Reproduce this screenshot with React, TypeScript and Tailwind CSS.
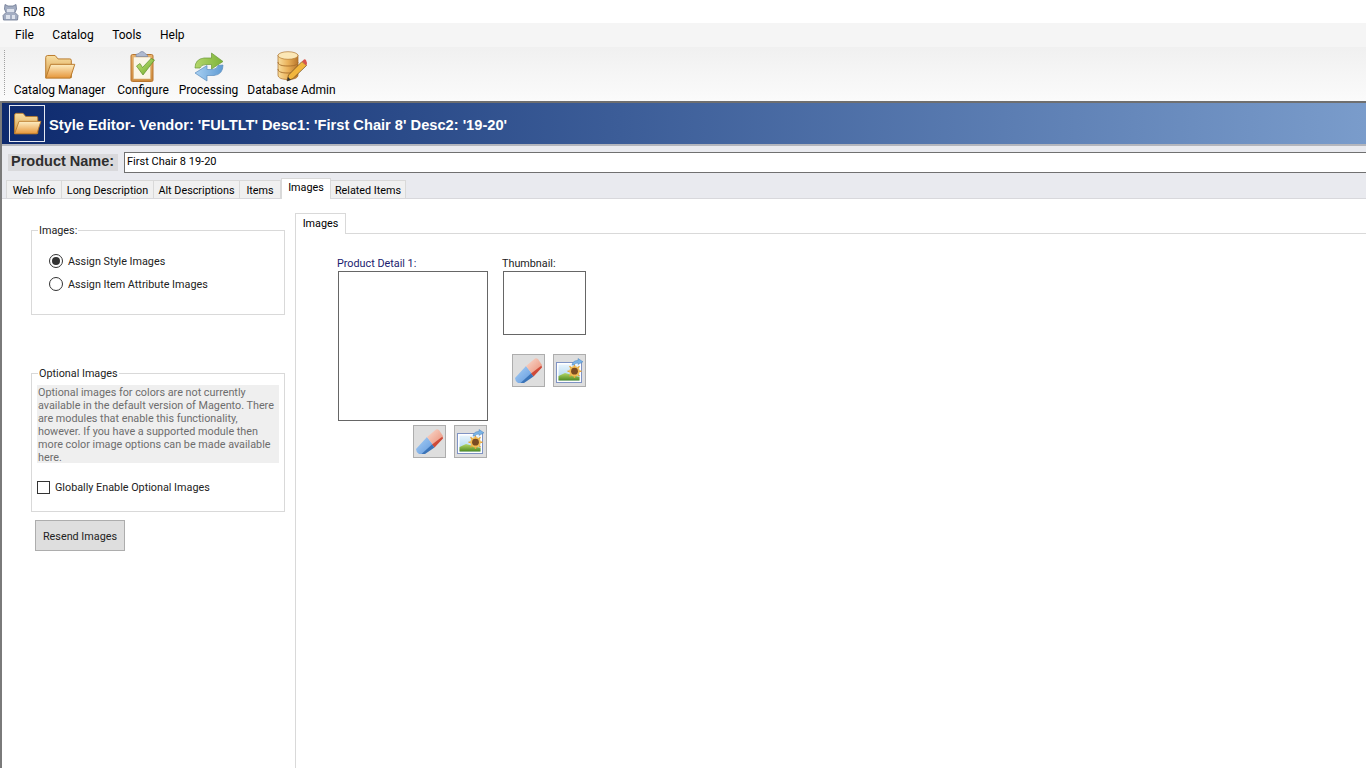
import React from "react";

const Folder = ({ size = 32, id = "a" }: { size?: number; id?: string }) => (
  <svg width={size} height={size * 0.8} viewBox="0 0 32 26">
    <defs>
      <linearGradient id={`fb${id}`} x1="0" y1="0" x2="0" y2="1"><stop offset="0" stopColor="#f8dfa3" /><stop offset="1" stopColor="#d69a45" /></linearGradient>
      <linearGradient id={`ff${id}`} x1="0" y1="0" x2="0" y2="1"><stop offset="0" stopColor="#fdeec4" /><stop offset="1" stopColor="#e6963a" /></linearGradient>
    </defs>
    <path d="M1.500 24V3.500Q1.500 1.500 3.500 1.500H11L14 5H26Q27.500 5 27.500 6.500V24Z" fill={`url(#fb${id})`} stroke="#b97a2c" />
    <path d="M1.500 24.500L6.500 10.500H31L26.500 24.500Z" fill={`url(#ff${id})`} stroke="#b97a2c" strokeLinejoin="round" />
  </svg>
);

const Clipboard = () => (
  <svg width="26" height="31" viewBox="0 0 26 31">
    <defs>
      <linearGradient id="cb" x1="0" y1="0" x2="0" y2="1"><stop offset="0" stopColor="#eab36b" /><stop offset="1" stopColor="#cf8a3c" /></linearGradient>
      <linearGradient id="cc" x1="0" y1="0" x2="1" y2="1"><stop offset="0" stopColor="#c8e87a" /><stop offset="1" stopColor="#6aa52a" /></linearGradient>
    </defs>
    <rect x="1" y="3.500" width="22" height="27" rx="1.500" fill="url(#cb)" stroke="#b7752f" />
    <rect x="3.500" y="6" width="17" height="22" fill="#fbf6e6" stroke="#d8b27d" strokeWidth="0.600" />
    <path d="M6 3.500Q7 3 9 2.500Q10 0.500 12 0.500Q14 0.500 15 2.500Q17 3 18 5.500H6Z" fill="#aeb9cf" stroke="#7c88a3" strokeWidth="0.700" />
    <path d="M6.500 15L10 12.500L12.500 16.500L21 7.500L24.500 9L13 24L6.500 15Z" fill="url(#cc)" stroke="#5d8f2a" strokeWidth="0.700" />
  </svg>
);

const Sync = () => (
  <svg width="30" height="30" viewBox="0 0 30 30">
    <defs>
      <linearGradient id="sg" x1="0" y1="0" x2="1" y2="0"><stop offset="0" stopColor="#b3d66a" /><stop offset="1" stopColor="#7db33a" /></linearGradient>
      <linearGradient id="sb" x1="0" y1="0" x2="1" y2="0"><stop offset="0" stopColor="#a8d0f2" /><stop offset="1" stopColor="#5f9bd3" /></linearGradient>
    </defs>
    <path d="M1 16Q1 7 10 6L17.500 6V1L29 9.500L17.500 17V12.500H12Q7 12.500 6 16Z" fill="url(#sg)" stroke="#6c9a38" strokeWidth="0.700" strokeLinejoin="round" />
    <path d="M29 13Q29 22.500 20 23.500L13 23.500V29L1 21L13 13.500V17.500H18Q23 17.500 24 13.500Z" fill="url(#sb)" stroke="#5a8cbd" strokeWidth="0.700" strokeLinejoin="round" />
  </svg>
);

const DbPencil = () => (
  <svg width="30" height="31" viewBox="0 0 30 31">
    <defs>
      <linearGradient id="dg" x1="0" y1="0" x2="1" y2="0"><stop offset="0" stopColor="#f9dd9c" /><stop offset="0.5" stopColor="#eab159" /><stop offset="1" stopColor="#b9772c" /></linearGradient>
    </defs>
    <path d="M1 4V24C1 27 5 28.500 11 28.500C17 28.500 21 27 21 24V4Z" fill="url(#dg)" stroke="#a86e2a" strokeWidth="0.700" />
    <ellipse cx="11" cy="4.500" rx="10" ry="3.800" fill="#fbe7b6" stroke="#b37a34" strokeWidth="0.700" />
    <path d="M1 11C1 14 5 15 11 15C17 15 21 14 21 11M1 18C1 21 5 22 11 22C17 22 21 21 21 18" fill="none" stroke="#a86e2a" strokeWidth="0.900" />
    <path d="M10 30L11.500 24L25 10.500L29.500 14.500L16 27.500Z" fill="#f2b63e" stroke="#6d4a1e" strokeWidth="0.700" strokeLinejoin="round" />
    <path d="M25 10.500L27 8.500Q28 8 29 9L30 12L29.500 14.500Z" fill="#d9534a" />
    <path d="M10 30L11 26L14 29Z" fill="#333" />
  </svg>
);

const Eraser = ({ id }: { id: string }) => (
  <svg width="27" height="25" viewBox="0 0 27 25">
    <defs>
      <linearGradient id={`eb${id}`} x1="0" y1="0" x2="1" y2="1"><stop offset="0" stopColor="#a9d0f6" /><stop offset="1" stopColor="#5f97dc" /></linearGradient>
      <linearGradient id={`er${id}`} x1="0" y1="0" x2="1" y2="1"><stop offset="0" stopColor="#f9dccf" /><stop offset="1" stopColor="#e98a72" /></linearGradient>
    </defs>
    <path d="M0 20L11 8L18 17L8 25H3Q0 23 0 20Z" fill={`url(#eb${id})`} />
    <path d="M11 8L20 0.500Q21.500 0 23 1L27 7L18 17Z" fill={`url(#er${id})`} />
    <path d="M26.500 7.500L27 9.500L18.500 18.500L16 15.500Z" fill="#cf4a38" />
    <path d="M16 15.500L18.500 18.500L9 25H5.500Z" fill="#3b74b8" />
  </svg>
);

const Photo = ({ id }: { id: string }) => (
  <svg width="27" height="25" viewBox="0 0 27 25">
    <defs>
      <linearGradient id={`ps${id}`} x1="0" y1="0" x2="0" y2="1"><stop offset="0" stopColor="#e6f3fc" /><stop offset="1" stopColor="#a8d3ee" /></linearGradient>
      <linearGradient id={`pg${id}`} x1="0" y1="0" x2="0" y2="1"><stop offset="0" stopColor="#b4d766" /><stop offset="1" stopColor="#4f8a22" /></linearGradient>
    </defs>
    <rect x="0.500" y="4.500" width="25" height="20" fill="#fff" stroke="#7f93c4" />
    <rect x="2.500" y="6.500" width="21" height="16" fill={`url(#ps${id})`} />
    <path d="M2.500 22.500V18L9 15L23.500 19V22.500Z" fill={`url(#pg${id})`} />
    <g stroke="#e8a33a" strokeWidth="1.400">
      <path d="M18.500 6.500V20M11.500 13.200H25.500M13.500 8.200L23.500 18.200M23.500 8.200L13.500 18.200" />
    </g>
    <circle cx="18.500" cy="13.200" r="5.200" fill="#f2bc52" />
    <circle cx="18.500" cy="13.200" r="3.400" fill="#7a4b22" />
    <path d="M16 7Q16.500 2.500 22 2.500V0.500L27 3.800L22 6.500V5Q19 5 18 7Z" fill="#7ab3e6" stroke="#4f86bd" strokeWidth="0.500" />
  </svg>
);

const AppIcon = () => (
  <svg width="17" height="18" viewBox="0 0 17 18">
    <path d="M3 1.500L6 3H11L14 1.500L14.500 6L13 9.500L16 12.500L15.500 17H1.500L1 12.500L4 9.500L2.500 6Z" fill="#a3adc2" stroke="#6b7690" strokeWidth="0.800" />
    <path d="M5 6H12V9H5ZM4 12H8V16H4ZM10 12H13V16H10Z" fill="#dde2ec" />
  </svg>
);

const ToolButton = ({ label, icon, className }: { label: string; icon: React.ReactNode; className: string }) => (
  <div className={`flex flex-col items-center ${className}`}>
    <div className="h-[31px] flex items-center justify-center">{icon}</div>
    <span className="text-[12px] leading-[16px] text-black whitespace-nowrap">{label}</span>
  </div>
);

const IconButton = ({ children }: { children: React.ReactNode }) => (
  <button className="w-[33px] h-[33px] bg-[#dedede] border border-[#adadad] flex items-center justify-center">
    {children}
  </button>
);

const tabs = [
  { label: "Web Info", w: "w-[56px]" },
  { label: "Long Description", w: "w-[92px]" },
  { label: "Alt Descriptions", w: "w-[86px]" },
  { label: "Items", w: "w-[41px]" },
];

export default function App() {
  return (
    <div className="w-[1366px] h-[768px] overflow-hidden bg-white flex flex-col text-black font-['Roboto',sans-serif]">
      <div className="h-[23px] bg-white flex items-center pl-[2px] shrink-0">
        <AppIcon />
        <span className="ml-[4px] text-[12px]">RD8</span>
      </div>
      <div className="h-[24px] bg-[#f5f5f5] flex items-center pl-[15px] gap-[18.5px] text-[12px] shrink-0">
        <span>File</span>
        <span>Catalog</span>
        <span>Tools</span>
        <span>Help</span>
      </div>
      <div className="h-[54px] bg-gradient-to-b from-[#f0f0f0] to-[#fbfbfb] flex shrink-0 relative pt-[4px] pl-[14px]">
        <div className="absolute left-[4px] top-[3px] bottom-[6px] border-l border-dotted border-[#a0a0a0]" />
        <ToolButton label="Catalog Manager" icon={<Folder />} className="w-[91px]" />
        <ToolButton label="Configure" icon={<Clipboard />} className="w-[54px] ml-[11px]" />
        <ToolButton label="Processing" icon={<Sync />} className="w-[57px] ml-[10px]" />
        <ToolButton label="Database Admin" icon={<DbPencil />} className="w-[87px] ml-[11px]" />
      </div>

      <div className="flex-1 flex flex-col border-l-2 border-l-[#7a7a7a] min-h-0">
        <div className="h-[45px] shrink-0 border-t-2 border-t-[#6f6f6f] border-b-2 border-b-[#b4b6bd] bg-gradient-to-r from-[#0e2a6e] to-[#7a9ccb] flex items-center pl-[7px]">
          <div className="w-[36px] h-[37px] border border-[#e6e9f2] flex items-center justify-center">
            <Folder size={29} id="h" />
          </div>
          <h1 className="ml-[4px] pt-[5px] text-white font-bold text-[14.65px] font-['Liberation_Sans',sans-serif] whitespace-nowrap">
            Style Editor- Vendor: 'FULTLT' Desc1: 'First Chair 8' Desc2: '19-20'
          </h1>
        </div>

        <div className="h-[53px] shrink-0 bg-[#e9eaef] border-b border-b-[#d8d8dc] flex flex-col">
          <div className="flex items-center h-[21px] mt-[6px] pl-[6px]">
            <div className="w-[110px] h-[17px] pb-[2px] bg-[#d9d9dc] flex items-center pl-[3px] text-[#2e2e2e] font-bold text-[14.5px] font-['Liberation_Sans',sans-serif] whitespace-nowrap">
              Product Name:
            </div>
            <div className="ml-[6px] flex-1 h-[21px] bg-white border border-[#707070] border-r-0 flex items-center pl-[2px] text-[11px]">
              First Chair 8 19-20
            </div>
          </div>
          <div className="flex items-end h-[20px] mt-[5px] pl-[4px] text-[10.8px]">
            {tabs.map((t) => (
              <div key={t.label} className={`${t.w} h-[18px] pt-[4px] bg-[#f0f0f0] border border-[#d9d9d9] border-b-0 border-l-0 first:border-l flex items-center justify-center whitespace-nowrap`}>
                {t.label}
              </div>
            ))}
            <div className="w-[50px] h-[21px] -mb-[1px] bg-white border border-[#d9d9d9] border-b-0 flex items-start pt-[1px] justify-center relative">Images</div>
            <div className="w-[75px] h-[18px] pt-[4px] bg-[#f0f0f0] border border-[#d9d9d9] border-b-0 border-l-0 flex items-center justify-center whitespace-nowrap">Related Items</div>
          </div>
        </div>

        <div className="flex-1 flex min-h-0 text-[10.8px]">
          <div className="w-[293px] shrink-0 pl-[29px] pr-[10px] pt-[24px]">
            <fieldset className="h-[92px] border border-[#d9d9d9] pl-[16px]">
              <legend className="-ml-[10px] px-[1px] leading-[14px] text-[#222]"><span className="relative top-[1px]">Images:</span></legend>
              <label className="flex items-center h-[16px] mt-[16px] gap-[5px] text-[#222]">
                <span className="w-[14px] h-[14px] rounded-full border border-[#333] flex items-center justify-center ml-[1px]">
                  <span className="w-[8px] h-[8px] rounded-full bg-[#333]" />
                </span>
                <span className="pt-[2px]">Assign Style Images</span>
              </label>
              <label className="flex items-center h-[16px] mt-[7px] gap-[5px] text-[#222]">
                <span className="w-[14px] h-[14px] rounded-full border border-[#333] ml-[1px]" />
                <span className="pt-[2px]">Assign Item Attribute Images</span>
              </label>
            </fieldset>

            <fieldset className="mt-[51px] h-[146px] border border-[#d9d9d9] px-[5px]">
              <legend className="ml-[1px] px-[1px] leading-[14px] text-[#222]"><span className="relative top-[1px]">Optional Images</span></legend>
              <p className="bg-[#efefef] text-[#6d6d6d] leading-[13px] w-[242px] h-[78px] pl-[1px] pt-[1px] mt-[5px] whitespace-nowrap">
                Optional images for colors are not currently<br />
                available in the default version of Magento. There<br />
                are modules that enable this functionality,<br />
                however. If you have a supported module then<br />
                more color image options can be made available<br />
                here.
              </p>
              <label className="flex items-center h-[14px] mt-[17px] gap-[5px] text-[#222]">
                <span className="w-[13px] h-[13px] border border-[#333]" />
                <span className="pt-[2px]">Globally Enable Optional Images</span>
              </label>
            </fieldset>

            <button className="mt-[8px] ml-[4px] w-[90px] h-[31px] pt-[3px] bg-[#dedede] border border-[#adadad] text-[#222]">
              Resend Images
            </button>
          </div>

          <div className="flex-1 mt-[14px] border-l border-l-[#d9d9d9] flex flex-col min-w-0">
            <div className="h-[21px] shrink-0 border-b border-b-[#d9d9d9] flex">
              <div className="w-[50px] h-[21px] bg-white border-t border-r border-[#d9d9d9] flex items-center justify-center">Images</div>
            </div>
            <div className="flex pl-[42px] pt-[21px]">
              <div className="w-[150px]">
                <div className="h-[16px] -ml-[1px] leading-[17px] text-[#1a1a6e] whitespace-nowrap">Product Detail 1:</div>
                <div className="w-[150px] h-[150px] border border-[#666]" />
                <div className="flex justify-end gap-[8px] mt-[4px] pr-[1px]">
                  <IconButton><Eraser id="1" /></IconButton>
                  <IconButton><Photo id="1" /></IconButton>
                </div>
              </div>
              <div className="w-[83px] ml-[15px]">
                <div className="h-[16px] -ml-[1px] leading-[17px] text-[#222] whitespace-nowrap">Thumbnail:</div>
                <div className="w-[83px] h-[64px] border border-[#666]" />
                <div className="flex justify-end gap-[8px] mt-[19px]">
                  <IconButton><Eraser id="2" /></IconButton>
                  <IconButton><Photo id="2" /></IconButton>
                </div>
              </div>
            </div>
          </div>
        </div>
      </div>
    </div>
  );
}
